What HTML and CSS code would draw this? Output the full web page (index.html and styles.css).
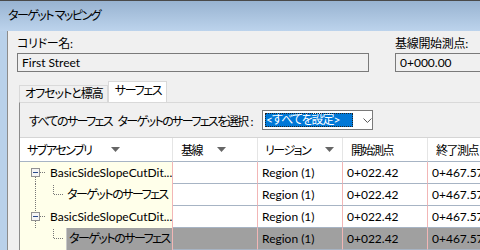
FILE: index.html
```html
<!DOCTYPE html>
<html>
<head>
  <meta charset="utf-8">
  <title>ターゲット マッピング</title>
  <link rel="stylesheet" href="styles.css">
</head>
<body>
  <div class="window">
    <div class="titlebar ja">ターゲット マッピング</div>
    <div class="frame">
      <div class="content">
        <div class="fields">
          <div class="field field-name">
            <div class="field-label">コリドー名:</div>
            <div class="field-input">First Street</div>
          </div>
          <div class="field field-station">
            <div class="field-label">基線開始測点:</div>
            <div class="field-input">0+000.00</div>
          </div>
        </div>

        <div class="tabs">
          <div class="tab">オフセットと標高</div>
          <div class="tab tab-active">サーフェス</div>
        </div>

        <div class="panel">
          <div class="filter">
            <span class="filter-label ja">すべてのサーフェス <span class="filter-second">ターゲットのサーフェスを選択</span><span class="colon">:</span></span>
            <div class="combo">
              <span class="combo-value">&lt;すべてを設定&gt;</span>
              <svg class="combo-arrow" width="9" height="5" viewBox="0 0 9 5"><path d="M0.5 0.5 L4.5 4.5 L8.5 0.5" fill="none" stroke="#555" stroke-width="1"/></svg>
            </div>
          </div>

          <div class="grid">
            <div class="head"><span class="ja">サブアセンブリ</span><svg class="sort sort-wide" width="9" height="5" viewBox="0 0 9 5"><polygon points="0,0 9,0 4.5,5" fill="#666"/></svg></div>
            <div class="head head-base"><span class="ja">基線</span><svg class="sort" width="9" height="5" viewBox="0 0 9 5"><polygon points="0,0 9,0 4.5,5" fill="#666"/></svg></div>
            <div class="head"><span class="ja">リージョン</span><svg class="sort" width="9" height="5" viewBox="0 0 9 5"><polygon points="0,0 9,0 4.5,5" fill="#666"/></svg></div>
            <div class="head head-base"><span class="ja">開始測点</span></div>
            <div class="head head-base"><span class="ja">終了測点</span></div>

            <!-- row 1 -->
            <div class="tree">
              <svg class="guides" width="30" height="22" viewBox="0 0 30 22">
                <rect x="11.5" y="6.5" width="8" height="8" fill="#f4f4f4" stroke="#919191"/>
                <line x1="13" y1="10.5" x2="18" y2="10.5" stroke="#2a4a8a"/>
                <line x1="20" y1="10.5" x2="26" y2="10.5" stroke="#777" stroke-dasharray="1 1"/>
                <line x1="15.5" y1="15" x2="15.5" y2="22" stroke="#777" stroke-dasharray="1 1"/>
              </svg>
              <span class="tree-text">BasicSideSlopeCutDit...</span>
            </div>
            <div class="cell"></div>
            <div class="cell">Region (1)</div>
            <div class="cell">0+022.42</div>
            <div class="cell">0+467.57</div>

            <!-- row 2 -->
            <div class="tree">
              <svg class="guides" width="47" height="22" viewBox="0 0 47 22">
                <line x1="15.5" y1="0" x2="15.5" y2="22" stroke="#777" stroke-dasharray="1 1"/>
                <line x1="33.5" y1="1" x2="33.5" y2="11" stroke="#777" stroke-dasharray="1 1"/>
                <line x1="34" y1="10.5" x2="44" y2="10.5" stroke="#777" stroke-dasharray="1 1"/>
              </svg>
              <span class="tree-text ja">ターゲットのサーフェス</span>
            </div>
            <div class="cell"></div>
            <div class="cell">Region (1)</div>
            <div class="cell">0+022.42</div>
            <div class="cell">0+467.57</div>

            <!-- row 3 -->
            <div class="tree">
              <svg class="guides" width="30" height="22" viewBox="0 0 30 22">
                <line x1="15.5" y1="0" x2="15.5" y2="6" stroke="#777" stroke-dasharray="1 1"/>
                <rect x="11.5" y="6.5" width="8" height="8" fill="#f4f4f4" stroke="#919191"/>
                <line x1="13" y1="10.5" x2="18" y2="10.5" stroke="#2a4a8a"/>
                <line x1="20" y1="10.5" x2="26" y2="10.5" stroke="#777" stroke-dasharray="1 1"/>
                <line x1="15.5" y1="15" x2="15.5" y2="22" stroke="#777" stroke-dasharray="1 1"/>
              </svg>
              <span class="tree-text">BasicSideSlopeCutDit...</span>
            </div>
            <div class="cell"></div>
            <div class="cell">Region (1)</div>
            <div class="cell">0+022.42</div>
            <div class="cell">0+467.57</div>

            <!-- row 4 (selected) -->
            <div class="tree">
              <svg class="guides" width="45" height="22" viewBox="0 0 45 22">
                <line x1="33.5" y1="1" x2="33.5" y2="11" stroke="#777" stroke-dasharray="1 1"/>
                <line x1="34" y1="10.5" x2="44" y2="10.5" stroke="#777" stroke-dasharray="1 1"/>
              </svg>
              <span class="tree-text tree-selected ja">ターゲットのサーフェス</span>
            </div>
            <div class="cell selected"></div>
            <div class="cell selected">Region (1)</div>
            <div class="cell selected">0+022.42</div>
            <div class="cell selected">0+467.57</div>
          </div>
        </div>
      </div>
    </div>
  </div>
</body>
</html>
```

FILE: styles.css
```css
body {
  margin: 0;
  font-family: Lato, "Noto Sans CJK JP", sans-serif;
  font-size: 12px;
  font-feature-settings: "palt";
  color: #000;
  overflow: hidden;
}

/* Japanese runs: Noto CJK is wider than the UI font of the original */
.ja {
  letter-spacing: -1.5px;
}

.window {
  width: 480px;
  height: 250px;
  overflow: hidden;
  border-top: 1px solid #4a4a4a;
  box-sizing: border-box;
}

.titlebar {
  height: 30px;
  line-height: 30px;
  padding-left: 8px;
  background: linear-gradient(#98b3d1, #bcd3ec);
}

.frame {
  display: flex;
  padding-left: 7px;
  background-color: #b9d1ea;
  height: 219px;
}

.content {
  flex: 1;
  min-width: 0;
  border-left: 1px solid #8c8c8c;
  background-color: #f0f0f0;
  padding: 5px 0 0 9px;
  overflow: hidden;
}

.fields {
  display: flex;
  gap: 26px;
}

.field-name {
  flex: 0 0 352px;
}

.field-station {
  flex: 0 0 120px;
}

.field-label {
  height: 16px;
  line-height: 16px;
  letter-spacing: -0.3px;
}

.field-input {
  margin-top: 1px;
  height: 19px;
  line-height: 17px;
  padding-left: 4px;
  border: 1px solid #7a7a7a;
  box-sizing: border-box;
  background-color: #f0f0f0;
}

.tabs {
  display: flex;
  align-items: flex-end;
  margin: 9px 0 0 2px;
  height: 21px;
}

.tab {
  height: 17px;
  line-height: 16px;
  padding: 0 4px 0 5px;
  letter-spacing: -1px;
  border: 1px solid #d9d9d9;
  border-bottom: none;
  box-sizing: border-box;
  background-color: #f0f0f0;
  white-space: nowrap;
}

.tab-active {
  height: 21px;
  line-height: 18px;
  padding: 0 5px 0 6px;
  letter-spacing: -1.3px;
  background-color: #fff;
}

.panel {
  margin-left: 2px;
  border-top: 1px solid #d9d9d9;
  border-left: 1px solid #8c8c8c;
  width: 500px;
}

.filter {
  display: flex;
  align-items: center;
  height: 34px;
  padding-left: 9px;
}

.filter-label {
  flex: 0 0 233px;
  white-space: nowrap;
  letter-spacing: -1.6px;
}

.filter-second {
  margin-left: 4px;
}

.colon {
  margin-left: 3px;
  letter-spacing: 0;
}

.combo {
  display: flex;
  align-items: center;
  width: 111px;
  height: 20px;
  padding-left: 2px;
  border: 1px solid #7a7a7a;
  box-sizing: border-box;
  background-color: #fff;
}

.combo-value {
  width: 88px;
  height: 14px;
  line-height: 13px;
  padding-left: 1px;
  letter-spacing: -1px;
  background-color: #0078d7;
  color: #fff;
  outline: 1px dotted #222;
  outline-offset: -1px;
  white-space: nowrap;
  overflow: hidden;
}

.combo-arrow {
  margin-left: 10px;
}

.grid {
  display: grid;
  grid-template-columns: 153px 85px 85px 85px 85px;
  grid-auto-rows: 22px;
  grid-template-rows: 24px;
  border-top: 1px solid #d5d5d5;
}

.head {
  display: flex;
  align-items: center;
  padding-left: 7px;
  background-color: #fff;
  border-right: 1px solid #e5e5e5;
  border-bottom: 1px solid #a7b4c4;
  white-space: nowrap;
  overflow: hidden;
}

.head-base {
  padding-left: 8px;
}

.sort {
  margin-left: 15px;
}

.sort-wide {
  margin-left: 20px;
}

.tree {
  display: flex;
  align-items: center;
  background-color: #ffffea;
  border-right: 1px solid #f2b6b6;
  white-space: nowrap;
  overflow: hidden;
}

.guides {
  flex: none;
}

.tree-text {
  line-height: 22px;
}

.tree-selected {
  align-self: stretch;
  flex: 1;
  margin-left: 1px;
  padding-left: 2px;
  background-color: #a0a0a0;
  border-left: 1px solid #c8c8c8;
}

.cell {
  padding-left: 4px;
  line-height: 21px;
  background-color: #fff;
  border-right: 1px solid #f2b6b6;
  border-bottom: 1px solid #a7b4c4;
  white-space: nowrap;
  overflow: hidden;
}

.cell.selected {
  background-color: #a0a0a0;
}
```
